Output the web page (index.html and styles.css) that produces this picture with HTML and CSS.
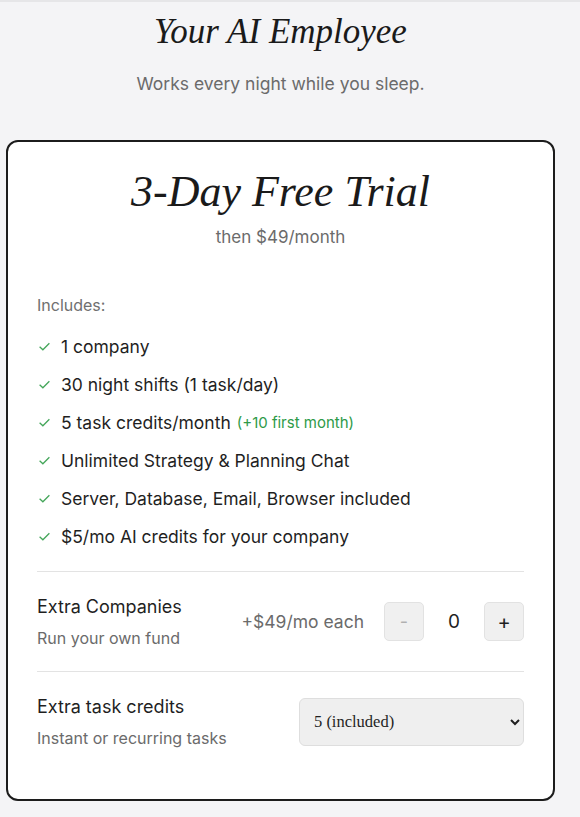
FILE: index.html
```html
<!DOCTYPE html>
<html>
<head>
<meta charset="utf-8">
<link rel="stylesheet" href="styles.css">
</head>
<body>
<div class="page">
  <header class="hero">
    <h1 class="hero-title">Your AI Employee</h1>
    <p class="hero-sub">Works every night while you sleep.</p>
  </header>
  <section class="card">
    <h2 class="plan-title">3-Day Free Trial</h2>
    <p class="plan-price">then $49/month</p>
    <p class="includes">Includes:</p>
    <ul class="features">
      <li><svg class="check" viewBox="0 0 12 12"><path d="M1.5 6.2 L4.5 9 L10.5 3" /></svg>1 company</li>
      <li><svg class="check" viewBox="0 0 12 12"><path d="M1.5 6.2 L4.5 9 L10.5 3" /></svg>30 night shifts (1 task/day)</li>
      <li><svg class="check" viewBox="0 0 12 12"><path d="M1.5 6.2 L4.5 9 L10.5 3" /></svg>5 task credits/month <span class="bonus">(+10 first month)</span></li>
      <li><svg class="check" viewBox="0 0 12 12"><path d="M1.5 6.2 L4.5 9 L10.5 3" /></svg>Unlimited Strategy &amp; Planning Chat</li>
      <li><svg class="check" viewBox="0 0 12 12"><path d="M1.5 6.2 L4.5 9 L10.5 3" /></svg>Server, Database, Email, Browser included</li>
      <li><svg class="check" viewBox="0 0 12 12"><path d="M1.5 6.2 L4.5 9 L10.5 3" /></svg>$5/mo AI credits for your company</li>
    </ul>
    <div class="option">
      <div class="option-text">
        <div class="option-name">Extra Companies</div>
        <div class="option-desc">Run your own fund</div>
      </div>
      <div class="stepper">
        <span class="each">+$49/mo each</span>
        <button class="step minus">-</button>
        <span class="count">0</span>
        <button class="step plus">+</button>
      </div>
    </div>
    <div class="option">
      <div class="option-text">
        <div class="option-name">Extra task credits</div>
        <div class="option-desc">Instant or recurring tasks</div>
      </div>
      <select class="credits">
        <option>5 (included)</option>
      </select>
    </div>
  </section>
</div>
</body>
</html>
```
FILE: styles.css
```css
html, body {
  margin: 0;
  padding: 0;
  background: #f4f4f6;
}
body {
  font-family: Inter, "Noto Sans", sans-serif;
  color: #1f1f1f;
  border-top: 2px solid #e6e6e8;
}
.page {
  width: 549px;
  margin-left: 6px;
}
.hero {
  text-align: center;
  padding-top: 10px;
}
.hero-title {
  margin: 0;
  font-family: "Liberation Serif", serif;
  font-style: italic;
  font-weight: 400;
  font-size: 35px;
  line-height: 40px;
  color: #1a1a1a;
}
.hero-sub {
  margin: 20px 0 0 0;
  font-size: 17.5px;
  line-height: 24px;
  color: #6b6b6b;
}
.card {
  margin-top: 44px;
  background: #fff;
  border: 2px solid #1c1c1c;
  border-radius: 12px;
  padding: 24px 29px 28px 29px;
}
.plan-title {
  margin: 0;
  text-align: center;
  font-family: "Liberation Serif", serif;
  font-style: italic;
  font-weight: 400;
  font-size: 44px;
  line-height: 52px;
  color: #1a1a1a;
}
.plan-price {
  margin: 8px 0 0 0;
  text-align: center;
  font-size: 17px;
  line-height: 22px;
  color: #6b6b6b;
}
.includes {
  margin: 46px 0 0 0;
  font-size: 16px;
  line-height: 22px;
  color: #707070;
}
.features {
  list-style: none;
  margin: 11px 0 0 0;
  padding: 0;
}
.features li {
  display: flex;
  align-items: center;
  height: 38px;
  font-size: 17.5px;
  color: #1f1f1f;
}
.check {
  width: 13px;
  height: 13px;
  margin: 0 10px 0 1px;
  fill: none;
  stroke: #44a65a;
  stroke-width: 1.2;
}
.bonus {
  color: #2e9a48;
  font-size: 15px;
  margin-left: 6px;
}
.option {
  display: flex;
  align-items: center;
  justify-content: space-between;
  border-top: 1px solid #e3e3e3;
  padding: 23px 0 23px 0;
}
.features + .option {
  margin-top: 16px;
}
.option-name {
  font-size: 18px;
  line-height: 24px;
  color: #1f1f1f;
}
.option-desc {
  margin-top: 9px;
  font-size: 16px;
  line-height: 20px;
  color: #6b6b6b;
}
.stepper {
  display: flex;
  align-items: center;
}
.each {
  font-size: 17.5px;
  color: #6b6b6b;
  margin-right: 20px;
}
.step {
  width: 40px;
  height: 39px;
  border: 1px solid #e2e2e2;
  border-radius: 5px;
  background: #f0f0f0;
  font-family: Inter, sans-serif;
  font-size: 20px;
  color: #1f1f1f;
  padding: 0;
}
.step.minus {
  color: #b0b0b0;
  font-size: 18px;
}
.count {
  width: 60px;
  text-align: center;
  font-size: 19px;
  color: #1f1f1f;
}
.credits {
  width: 225px;
  height: 48px;
  border: 1px solid #dedede;
  border-radius: 6px;
  background: #efefef;
  font-family: "Liberation Serif", serif;
  font-size: 16.5px;
  color: #1f1f1f;
  padding: 0 10px 0 10px;
}
```
